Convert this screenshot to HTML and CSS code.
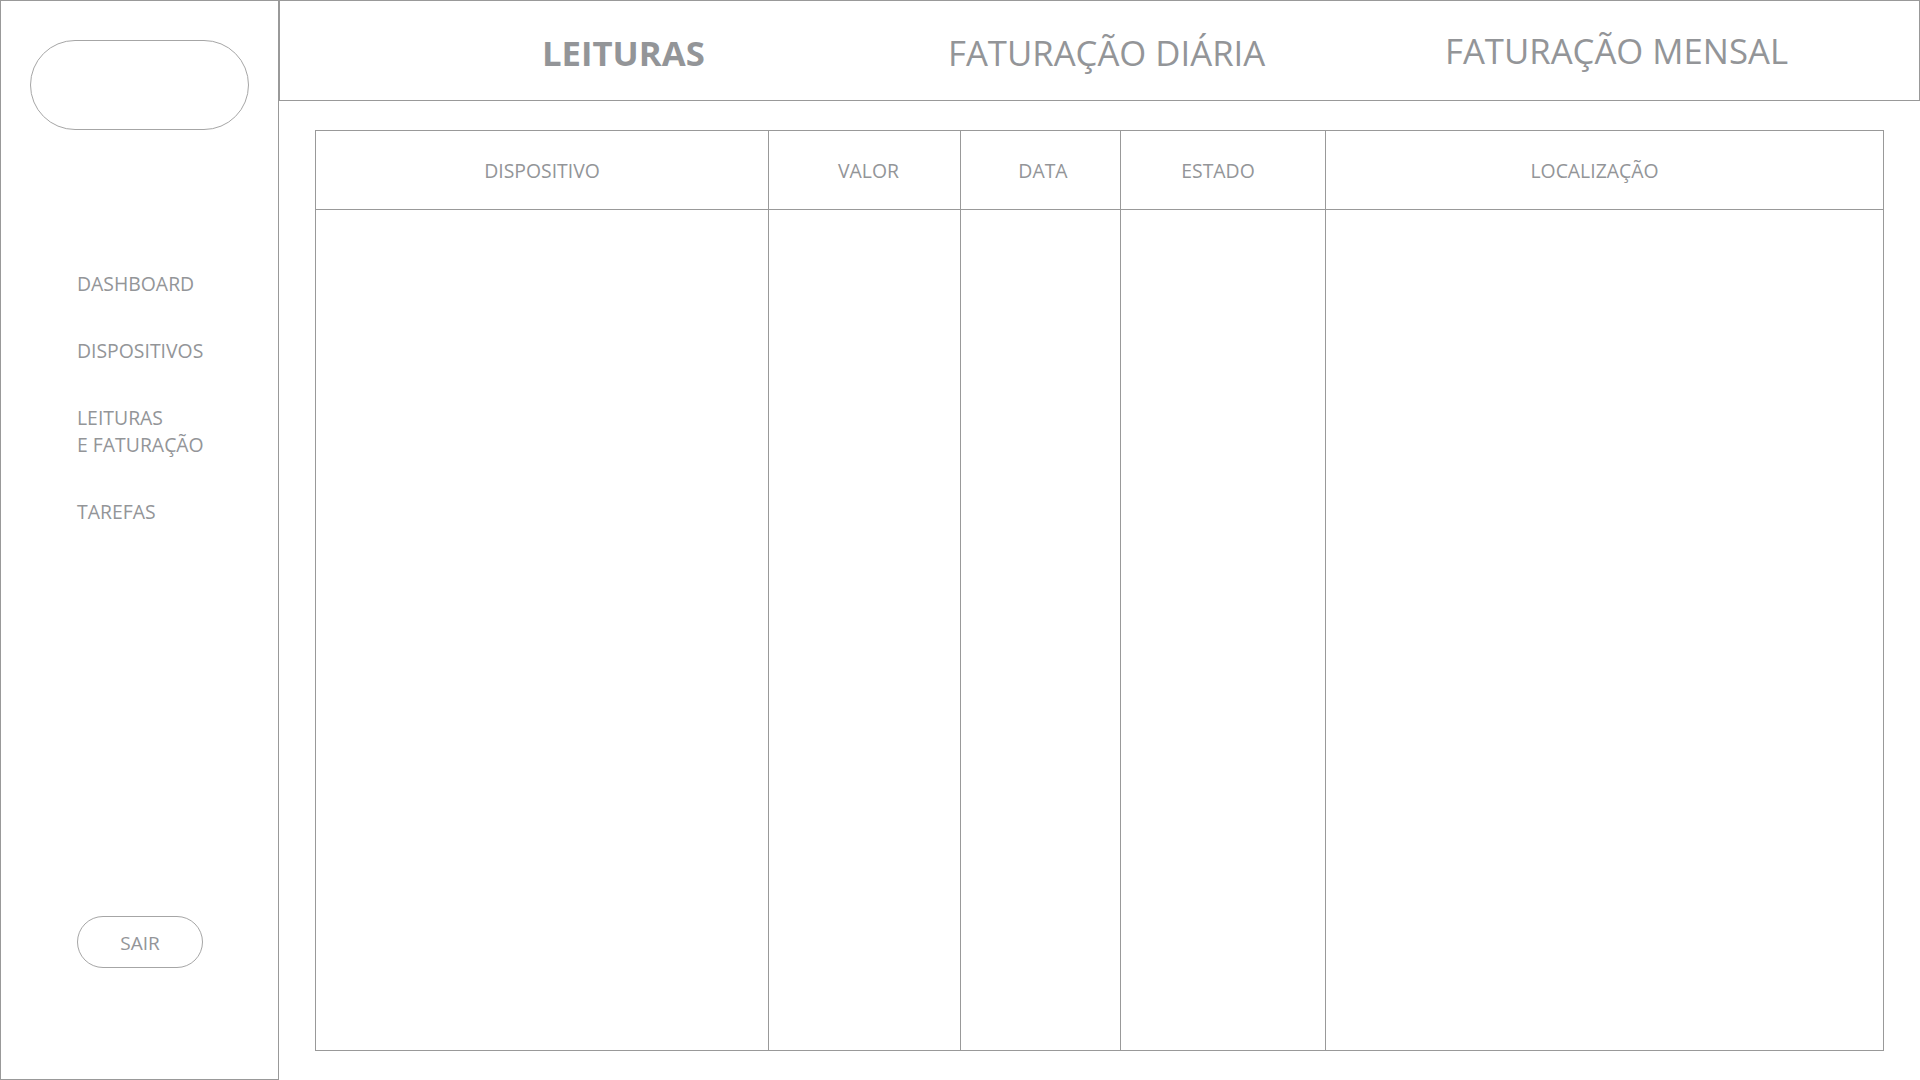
FILE: index.html
```html
<!DOCTYPE html>
<html lang="pt">
  <head>
    <meta charset="UTF-8" />
    <meta name="viewport" content="width=device-width, initial-scale=1.0" />
    <title>Leituras e Faturação</title>
    <link rel="stylesheet" href="styles.css">
  </head>
  <body>
    <aside class="sidebar">
      <div class="logo"></div>
      <nav class="menu">
        <ul>
          <li>DASHBOARD</li>
          <li>DISPOSITIVOS</li>
          <li>LEITURAS<br />E FATURAÇÃO</li>
          <li>TAREFAS</li>
        </ul>
      </nav>
      <button type="button" class="logout">SAIR</button>
    </aside>
    <main class="content">
      <header class="tabs">
        <div class="tab active">LEITURAS</div>
        <div class="tab">FATURAÇÃO DIÁRIA</div>
        <div class="tab">FATURAÇÃO MENSAL</div>
      </header>
      <section class="readings">
        <table>
          <colgroup>
            <col class="c-device" />
            <col class="c-value" />
            <col class="c-date" />
            <col class="c-state" />
            <col class="c-place" />
          </colgroup>
          <thead>
            <tr>
              <th>DISPOSITIVO</th>
              <th class="th-value">VALOR</th>
              <th class="th-date">DATA</th>
              <th class="th-state">ESTADO</th>
              <th class="th-place">LOCALIZAÇÃO</th>
            </tr>
          </thead>
          <tbody>
            <tr>
              <td></td>
              <td></td>
              <td></td>
              <td></td>
              <td></td>
            </tr>
          </tbody>
        </table>
      </section>
    </main>
  </body>
</html>
```

FILE: styles.css
```css
/* reset */
* {
  margin: 0;
  padding: 0;
  box-sizing: border-box;
}
body {
  width: 1920px;
  height: 1080px;
  display: flex;
  font-family: "Open Sans", "Liberation Sans", sans-serif;
  color: #939598;
  background-color: #fff;
  overflow: hidden;
}

/* menu lateral */
.sidebar {
  width: 279px;
  height: 1080px;
  flex-shrink: 0;
  border: 1px solid #999;
  display: flex;
  flex-direction: column;
  padding-top: 39px;
}
.logo {
  width: 219px;
  height: 90px;
  margin-left: 29px;
  border: 1px solid #a6a6a6;
  border-radius: 45px;
}
.menu {
  margin-top: 140px;
  padding-left: 76px;
}
.menu ul {
  list-style: none;
  display: flex;
  flex-direction: column;
  gap: 40px;
}
.menu li {
  font-size: 19.4px;
  line-height: 27px;
  cursor: pointer;
}
.logout {
  margin-top: auto;
  margin-bottom: 111px;
  margin-left: 76px;
  width: 126px;
  height: 52px;
  padding-top: 2px;
  border: 1px solid #a6a6a6;
  border-radius: 26px;
  background: none;
  font-family: inherit;
  font-size: 19px;
  color: #939598;
  cursor: pointer;
}

/* area principal */
.content {
  flex: 1;
  display: flex;
  flex-direction: column;
}
.tabs {
  height: 101px;
  border: 1px solid #999;
  display: flex;
  padding: 28px 0 0 262px;
  font-size: 34.7px;
  line-height: 47px;
}
.tab {
  cursor: pointer;
  white-space: nowrap;
}
.tab:nth-child(1) {
  width: 406px;
  font-weight: 700;
}
.tab:nth-child(2) {
  width: 497px;
}
.tab:nth-child(3) {
  margin-top: -2px;
}

.readings {
  padding: 29px 0 0 36px;
}
table {
  width: 1569px;
  height: 921px;
  border-collapse: collapse;
  table-layout: fixed;
}
.c-device {
  width: 453px;
}
.c-value {
  width: 192px;
}
.c-date {
  width: 160px;
}
.c-state {
  width: 205px;
}
th,
td {
  border: 1px solid #999;
}
th {
  height: 79px;
  font-size: 19.4px;
  font-weight: 400;
  text-align: center;
  vertical-align: middle;
}
/* os titulos nao estao todos ao centro exato */
.th-value {
  padding-left: 8px;
}
.th-date {
  padding-left: 5px;
}
.th-state {
  padding-right: 10px;
}
.th-place {
  padding-right: 20px;
}
```
